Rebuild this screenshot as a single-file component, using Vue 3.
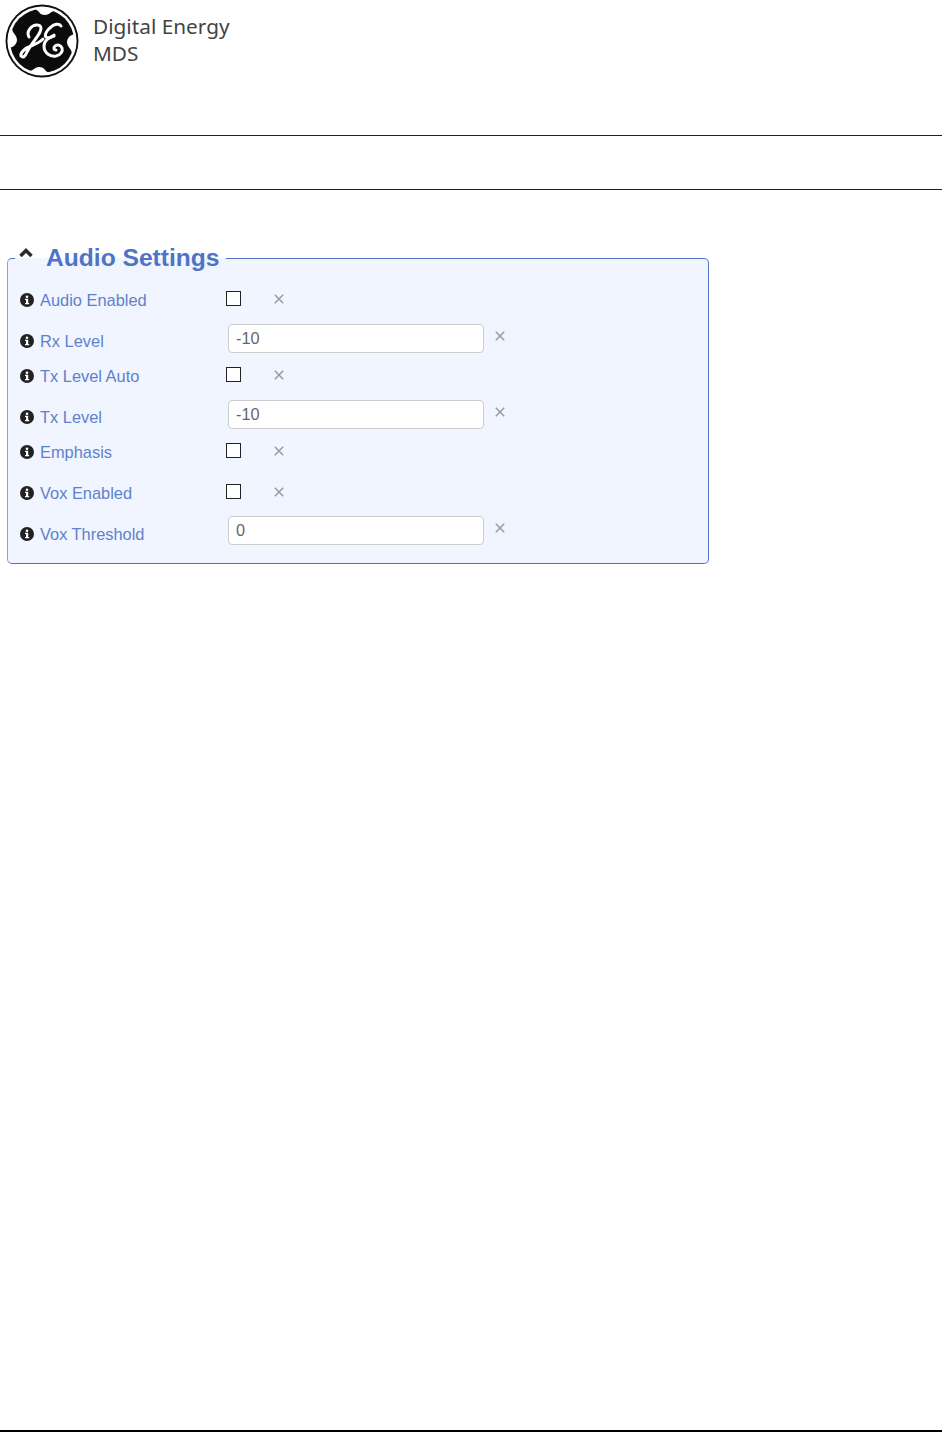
<template>
  <div class="page">
    <header class="brand">
      <svg class="logo" viewBox="0 0 74 74" fill="none">
        <circle cx="37" cy="37" r="36.5" fill="#111" />
        <circle cx="37" cy="37" r="34.6" fill="#fff" />
        <circle cx="37" cy="37" r="32" fill="#0b0b0b" />
        <!-- flourishes round the ring -->
        <path d="M30 5c7-2 13-1 19 2-4 1-5 4-9 4-3 0-5-1-6-3-1-1-2-2-4-3z" fill="#fff" />
        <path d="M5 44c-2-7-1-14 2-20 0 5 5 7 5 12 0 3-2 5-3 6-1 1-3 1-4 2z" fill="#fff" />
        <path d="M44 69c-7 2-13 1-19-2 4-1 5-4 9-4 3 0 5 1 6 3 1 1 2 2 4 3z" fill="#fff" />
        <path d="M69 30c2 7 1 14-2 20 0-5-5-7-5-12 0-3 2-5 3-6 1-1 3-1 4-2z" fill="#fff" />
        <!-- GE script -->
        <g stroke="#fff" stroke-width="3" stroke-linecap="round">
          <path d="M24 33c-3-5 2-12 8-12 4 0 5 3 3 7-3 6-9 12-13 20-2 5-4 6-6 4-1-3 4-8 10-10 5-2 9-4 12-7" />
          <path d="M56 22c-2-3-7-2-10 1-4 3-7 8-5 10 2 2 6 0 8-2" />
          <path d="M49 32c-5 1-10 5-10 10 0 7 6 11 12 10 5-1 7-5 6-8-1-3-5-4-7-2-2 2-1 4 1 4" />
        </g>
      </svg>
      <div class="brand-text">
        <span>Digital Energy</span>
        <span>MDS</span>
      </div>
    </header>

    <div class="nav-band"></div>

    <fieldset class="panel">
      <legend class="panel-title">
        <svg class="chevron" viewBox="0 0 14 10" fill="none">
          <path d="M1.500 8 7 2.500 12.500 8" stroke="#2b2b2b" stroke-width="3.500" />
        </svg>
        <span>Audio Settings</span>
      </legend>

      <div
        v-for="row in rows"
        :key="row.label"
        class="row"
        :class="row.type === 'input' ? 'row-input' : 'row-check'"
      >
        <label class="field-label">
          <svg class="info" viewBox="0 0 14 14">
            <circle cx="7" cy="7" r="7" fill="#222" />
            <circle cx="7" cy="3.800" r="1.300" fill="#fff" />
            <path d="M5 5.800h3.200v4.200h1v1.300H5V10h1V7.100H5z" fill="#fff" />
          </svg>
          <span>{{ row.label }}</span>
        </label>
        <div class="control">
          <input v-if="row.type === 'input'" class="text-field" type="text" :value="row.value" />
          <span v-else class="check-box"></span>
        </div>
        <svg class="clear" viewBox="0 0 10 10" fill="none">
          <path d="M.8.800l8.400 8.400M9.200.800.800 9.200" stroke="#9a9a9a" stroke-width="1.500" />
        </svg>
      </div>
    </fieldset>

    <div class="page-rule"></div>
  </div>
</template>

<script setup>
const rows = [
  { label: 'Audio Enabled', type: 'check' },
  { label: 'Rx Level', type: 'input', value: '-10' },
  { label: 'Tx Level Auto', type: 'check' },
  { label: 'Tx Level', type: 'input', value: '-10' },
  { label: 'Emphasis', type: 'check' },
  { label: 'Vox Enabled', type: 'check' },
  { label: 'Vox Threshold', type: 'input', value: '0' }
]
</script>

<style>
html,
body {
  margin: 0;
  background: #fff;
}
</style>

<style scoped>
.page {
  position: relative;
  width: 942px;
  height: 1432px;
  box-sizing: border-box;
  overflow: hidden;
  font-family: "Liberation Sans", Arial, sans-serif;
  background: #fff;
}

.brand {
  display: flex;
  align-items: flex-start;
  height: 135px;
  box-sizing: border-box;
  padding: 4px 0 0 5px;
}

.logo {
  width: 74px;
  height: 74px;
  flex: none;
}

.brand-text {
  display: flex;
  flex-direction: column;
  margin: 9px 0 0 14px;
  font-family: "Noto Sans", sans-serif;
  font-size: 20.800px;
  line-height: 27px;
  color: #444;
}

.nav-band {
  height: 53px;
  border-top: 1px solid #222;
  border-bottom: 1px solid #222;
}

.panel {
  width: 702px;
  height: 321px;
  box-sizing: border-box;
  margin: 53px 0 0 7px;
  padding: 11px 0 0 12px;
  border: 1px solid #4f74c4;
  border-left-color: #86a0da;
  border-radius: 5px;
  background: #f0f5ff;
}

.panel-title {
  display: flex;
  align-items: flex-start;
  margin-left: -5px;
  padding: 0 6px 0 4px;
  height: 30px;
  font-size: 24.600px;
  line-height: 30px;
  font-weight: 700;
  color: #4f73c6;
}

.chevron {
  width: 14px;
  height: 10px;
  margin: 5px 13px 0 0;
}

.row {
  display: flex;
  align-items: flex-start;
}

.row-check {
  height: 41px;
}

.row-input {
  height: 35px;
}

.field-label {
  display: flex;
  align-items: center;
  width: 206px;
  height: 20px;
  margin-top: 6px;
  font-size: 16.400px;
  color: #5f81cb;
}

.info {
  width: 14px;
  height: 14px;
  margin-right: 6px;
  margin-top: -1px;
  flex: none;
}

.control {
  flex: none;
}

.check-box {
  display: block;
  width: 15px;
  height: 15px;
  box-sizing: border-box;
  margin-top: 7px;
  border: 1.500px solid #222;
  background: #fff;
}

.row-check .clear {
  margin: 10px 0 0 33px;
}

.text-field {
  display: block;
  width: 256px;
  height: 29px;
  box-sizing: border-box;
  margin: -1px 0 0 2px;
  padding: 0 7px;
  border: 1px solid #ccc;
  border-radius: 4px;
  background: #fff;
  font-family: inherit;
  font-size: 16.300px;
  color: #666;
  outline: none;
}

.clear {
  width: 10px;
  height: 10px;
  flex: none;
}

.row-input .clear {
  margin: 6px 0 0 11px;
}

.row:last-child .text-field {
  margin-top: -2px;
}

.row:last-child .clear {
  margin-top: 5px;
}

.page-rule {
  position: absolute;
  left: 0;
  right: 0;
  bottom: 0;
  height: 2px;
  background: #000;
}
</style>
